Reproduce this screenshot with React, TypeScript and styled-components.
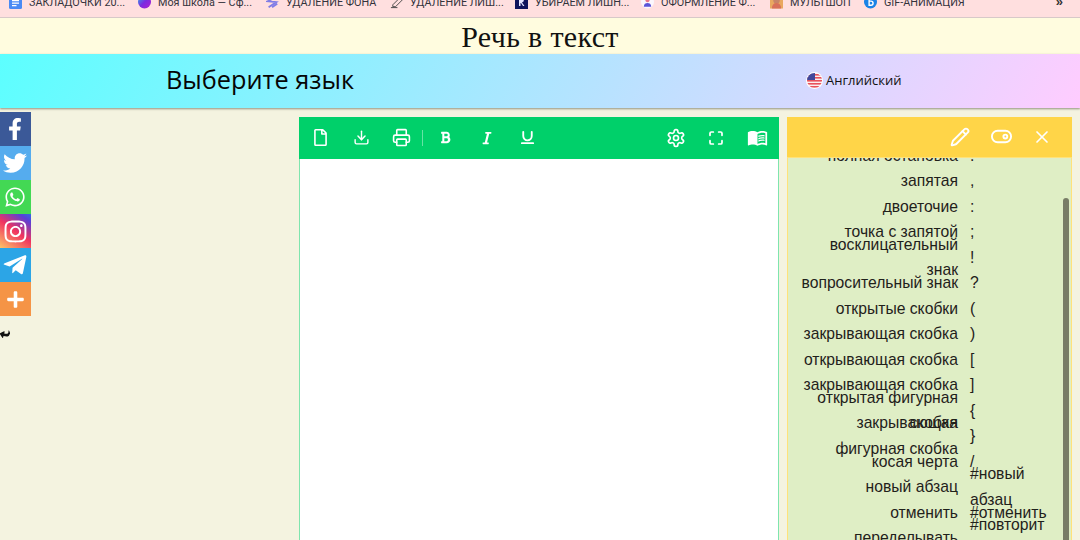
import React from "react";
import styled, { createGlobalStyle } from "styled-components";
import { FaFacebookF, FaTwitter, FaWhatsapp, FaInstagram, FaTelegramPlane, FaPlus, FaReply, FaBold, FaItalic, FaRegFile } from "react-icons/fa";
import { LuDownload, LuPrinter, LuSettings, LuToggleRight, LuX, LuPencil, LuUnderline, LuMaximize } from "react-icons/lu";
import { MdMenuBook } from "react-icons/md";

const Global = createGlobalStyle`
  html, body { margin: 0; padding: 0; height: 540px; overflow: hidden; background: #f4f3e0; }
  * { box-sizing: border-box; }
`;

const Page = styled.div`
  position: relative;
  width: 1080px;
  height: 540px;
  overflow: hidden;
  display: flex;
  flex-direction: column;
  background: #f4f3e0;
`;

const BookmarkBar = styled.div`
  height: 18px;
  flex: none;
  background: #ffdfdf;
  border-bottom: 1px solid #d8c9c9;
  overflow: hidden;
  position: relative;
`;
const BookmarkTrack = styled.div`
  display: flex;
  height: 14px;
  margin-top: -5px;
  padding-left: 9px;
  align-items: center;
`;
const Bookmark = styled.div<{ $w: number }>`
  width: ${(p) => p.$w}px;
  flex: none;
  display: flex;
  align-items: center;
  gap: 7px;
  font: 10.8px Roboto, "Liberation Sans", sans-serif;
  color: #33333c;
  white-space: nowrap;
`;
const More = styled.div`
  position: absolute;
  right: 17px;
  top: -6px;
  font: 700 13px "Liberation Sans", sans-serif;
  color: #333;
`;

const TitleBar = styled.h1`
  margin: 0;
  height: 36px;
  flex: none;
  background: #fffcdf;
  text-align: center;
  font: 400 30px/37px "Liberation Serif", serif;
  color: #111;
  letter-spacing: 0.35px;
`;

const LangBar = styled.div`
  height: 54px;
  flex: none;
  background: linear-gradient(120deg, #5cffff 0%, #ffccff 100%);
  box-shadow: 0 1px 2px rgba(80, 80, 60, 0.6);
  display: flex;
  align-items: center;
  padding: 0 0 4px 166px;
`;
const LangTitle = styled.div`
  width: 640px;
  flex: none;
  font: 400 25.3px "Open Sans", sans-serif;
  color: #050505;
`;
const LangPick = styled.div`
  display: flex;
  align-items: center;
  gap: 3px;
  margin-top: 2px;
  font: 500 13px "Open Sans", sans-serif;
  color: #111;
`;

const Main = styled.div`
  flex: 1;
  min-height: 0;
  display: flex;
  gap: 8px;
  padding: 9px 0 0 299px;
`;

const Social = styled.div`
  position: absolute;
  left: 0;
  top: 112px;
  width: 31px;
  display: flex;
  flex-direction: column;
`;
const SocialBtn = styled.div<{ $bg: string; $size?: number }>`
  height: 34px;
  padding-right: 1px;
  display: flex;
  align-items: center;
  justify-content: center;
  background: ${(p) => p.$bg};
  color: #fff;
  font-size: ${(p) => p.$size ?? 22}px;
`;
const Hide = styled.div`
  position: absolute;
  left: 0;
  top: 327px;
  color: #111;
  font-size: 10px;
  line-height: 10px;
  transform: scaleY(-1) rotate(-15deg);
`;

const Editor = styled.div`
  width: 480px;
  flex: none;
  display: flex;
  flex-direction: column;
  background: #fff;
  border: solid #7fe5ae;
  border-width: 0 1px;
`;
const Toolbar = styled.div`
  height: 42px;
  flex: none;
  margin: 0 -1px;
  padding: 0 11px 1px 13px;
  background: #00d06a;
  display: flex;
  align-items: center;
  color: #fff;
`;
const ToolIcon = styled.span<{ $w: number; $size?: number }>`
  width: ${(p) => p.$w}px;
  flex: none;
  display: flex;
  align-items: center;
  justify-content: flex-start;
  font-size: ${(p) => p.$size ?? 17}px;
`;
const ToolDivider = styled.span`
  width: 1px;
  height: 16px;
  background: rgba(255, 255, 255, 0.4);
  margin: 0 16px 0 -1px;
  flex: none;
`;
const ToolSpacer = styled.span`
  flex: 1;
`;

const Panel = styled.div`
  width: 285px;
  flex: none;
  display: flex;
  flex-direction: column;
  background: #dfeec5;
  border: solid #ffe27a;
  border-width: 0 1px;
`;
const PanelHead = styled.div`
  height: 41px;
  flex: none;
  margin: 0 -1px;
  background: #ffd548;
  border-bottom: 1px solid #ffe27a;
  display: flex;
  align-items: center;
  justify-content: flex-end;
  gap: 19.5px;
  padding: 0 20px 1px 0;
  color: #fff;
  font-size: 20px;
  position: relative;
  z-index: 1;
`;
const PanelBody = styled.div`
  flex: 1;
  min-height: 0;
  overflow: hidden;
  position: relative;
`;
const List = styled.div`
  margin-top: -15.5px;
  font: 15.7px/25.5px "Liberation Sans", Arial, sans-serif;
  color: #1f211b;
`;
const Row = styled.div`
  height: 25.5px;
  display: flex;
  align-items: center;
  gap: 12px;
  padding-left: 12px;
`;
const Name = styled.div`
  width: 158px;
  flex: none;
  text-align: right;
`;
const Sym = styled.div`
  width: 78px;
  flex: none;
  overflow-wrap: anywhere;
`;
const Thumb = styled.div`
  position: absolute;
  right: 2px;
  top: 40px;
  bottom: 0;
  width: 6px;
  background: #787c66;
  border-radius: 3px 3px 0 0;
`;

const DocsIcon = () => (
  <svg width="13" height="13" viewBox="0 0 13 13">
    <rect width="13" height="13" rx="1.5" fill="#4a8af4" />
    <path d="M3 4h7v1.2H3zM3 6.500h7v1.2H3zM3 9h4.500v1.2H3z" fill="#fff" />
  </svg>
);
const SchoolIcon = () => (
  <svg width="13" height="14" viewBox="0 0 14 14">
    <defs>
      <linearGradient id="schoolg" x1="0" y1="0" x2="1" y2="1">
        <stop offset="0" stopColor="#2fb4e8" />
        <stop offset="0.5" stopColor="#7a2be0" />
        <stop offset="1" stopColor="#b01fd0" />
      </linearGradient>
    </defs>
    <circle cx="7" cy="7" r="7" fill="url(#schoolg)" />
  </svg>
);
const ScribbleIcon = () => (
  <svg width="13" height="13" viewBox="0 0 15 13" fill="none" stroke="#7f7ce6" strokeWidth="2">
    <path d="M11 1 2 5l10 1-9 6M13 8l-6 4" />
  </svg>
);
const EraseIcon = () => (
  <svg width="13" height="13" viewBox="0 0 14 13" fill="none" stroke="#444" strokeWidth="1">
    <path d="M1 12h7M3 9l7-7 3 2-7 7H3z" />
  </svg>
);
const NavyIcon = () => (
  <svg width="13" height="13" viewBox="0 0 13 13">
    <rect width="13" height="13" fill="#10145c" />
    <path d="M4 10V3h4l1 2-2 1.500L9.500 10H8L6 7H5.500v3z" fill="#e6e6ff" />
  </svg>
);
const FigureIcon = () => (
  <svg width="13" height="14" viewBox="0 0 14 14">
    <circle cx="7" cy="7" r="7" fill="#fbf7fd" />
    <circle cx="7" cy="5" r="2.200" fill="#e8758a" />
    <path d="M3 12c0-3 2-4 4-4s4 1 4 4z" fill="#5a55d8" />
  </svg>
);
const PhotoIcon = () => (
  <svg width="13" height="14" viewBox="0 0 14 14">
    <rect width="14" height="14" fill="#e9a860" />
    <circle cx="7" cy="5" r="3.500" fill="#c88468" />
    <path d="M2 14c0-4 2-6 5-6s5 2 5 6z" fill="#d8705a" />
  </svg>
);
const GifIcon = () => (
  <svg width="13" height="14" viewBox="0 0 14 14">
    <circle cx="7" cy="7" r="7" fill="#1a83e6" />
    <path d="M5.500 3v7.500h2a2 2 0 0 0 0-4.500h-2" fill="none" stroke="#fff" strokeWidth="1.500" />
  </svg>
);

const marks: [string, React.ReactNode, number][] = [
  ["ЗАКЛАДОЧКИ 20...", <DocsIcon />, 129],
  ["Моя школа — Сф...", <SchoolIcon />, 128],
  ["УДАЛЕНИЕ ФОНА", <ScribbleIcon />, 124],
  ["УДАЛЕНИЕ ЛИШ...", <EraseIcon />, 125],
  ["УБИРАЕМ ЛИШН...", <NavyIcon />, 126],
  ["ОФОРМЛЕНИЕ Ф...", <FigureIcon />, 129],
  ["МУЛЬТШОП", <PhotoIcon />, 94],
  ["GIF-АНИМАЦИЯ", <GifIcon />, 120],
];

const rows: [string, string][] = [
  ["полная остановка", "."],
  ["запятая", ","],
  ["двоеточие", ":"],
  ["точка с запятой", ";"],
  ["восклицательный знак", "!"],
  ["вопросительный знак", "?"],
  ["открытые скобки", "("],
  ["закрывающая скобка", ")"],
  ["открывающая скобка", "["],
  ["закрывающая скобка", "]"],
  ["открытая фигурная скобка", "{"],
  ["закрывающая фигурная скобка", "}"],
  ["косая черта", "/"],
  ["новый абзац", "#новый абзац"],
  ["отменить", "#отменить"],
  ["переделывать", "#повторить"],
];

const Flag = () => (
  <svg width="17" height="17" viewBox="0 0 17 17">
    <defs>
      <clipPath id="flagc"><circle cx="8.500" cy="8.500" r="7.500" /></clipPath>
    </defs>
    <circle cx="8.500" cy="8.500" r="8.500" fill="#fff" />
    <g clipPath="url(#flagc)">
      <rect width="17" height="17" fill="#fbeeee" />
      {[1, 4, 7, 10, 13].map((y) => (
        <rect key={y} y={y + 1} width="17" height="1.600" fill="#e8505b" />
      ))}
      <rect width="9" height="8" fill="#41479b" />
    </g>
  </svg>
);

export default function App() {
  return (
    <Page>
      <Global />
      <BookmarkBar>
        <BookmarkTrack>
          {marks.map(([t, icon, w]) => (
            <Bookmark key={t} $w={w}>
              {icon}
              {t}
            </Bookmark>
          ))}
        </BookmarkTrack>
        <More>»</More>
      </BookmarkBar>
      <TitleBar>Речь в текст</TitleBar>
      <LangBar>
        <LangTitle>Выберите язык</LangTitle>
        <LangPick>
          <Flag />
          Английский
        </LangPick>
      </LangBar>
      <Social>
        <SocialBtn $bg="#3b5998"><FaFacebookF /></SocialBtn>
        <SocialBtn $bg="#55acee" $size={24}><FaTwitter /></SocialBtn>
        <SocialBtn $bg="#43d854"><FaWhatsapp /></SocialBtn>
        <SocialBtn $bg="linear-gradient(35deg,#fdc468 0%,#f0345f 50%,#5b3fd6 85%,#2f6ce0 100%)" $size={25}><FaInstagram /></SocialBtn>
        <SocialBtn $bg="#2ca5e6" $size={26}><FaTelegramPlane /></SocialBtn>
        <SocialBtn $bg="#f59446" $size={19}><FaPlus /></SocialBtn>
      </Social>
      <Hide><FaReply /></Hide>
      <Main>
        <Editor>
          <Toolbar>
            <ToolIcon $w={41}><FaRegFile /></ToolIcon>
            <ToolIcon $w={39}><LuDownload /></ToolIcon>
            <ToolIcon $w={31} $size={19}><LuPrinter /></ToolIcon>
            <ToolDivider />
            <ToolIcon $w={41} $size={13}><FaBold /></ToolIcon>
            <ToolIcon $w={39} $size={14}><FaItalic /></ToolIcon>
            <ToolIcon $w={40} $size={17}><LuUnderline strokeWidth={2.6} /></ToolIcon>
            <ToolSpacer />
            <ToolIcon $w={41.5} $size={20}><LuSettings /></ToolIcon>
            <ToolIcon $w={39.5} $size={16}><LuMaximize strokeWidth={2.6} /></ToolIcon>
            <ToolIcon $w={21} $size={23}><MdMenuBook /></ToolIcon>
          </Toolbar>
        </Editor>
        <Panel>
          <PanelHead>
            <LuPencil strokeWidth={2.3} />
            <LuToggleRight size={23} />
            <LuX />
          </PanelHead>
          <PanelBody>
            <List>
              {rows.map(([a, b], i) => (
                <Row key={i}>
                  <Name>{a}</Name>
                  <Sym>{b}</Sym>
                </Row>
              ))}
            </List>
            <Thumb />
          </PanelBody>
        </Panel>
      </Main>
    </Page>
  );
}
